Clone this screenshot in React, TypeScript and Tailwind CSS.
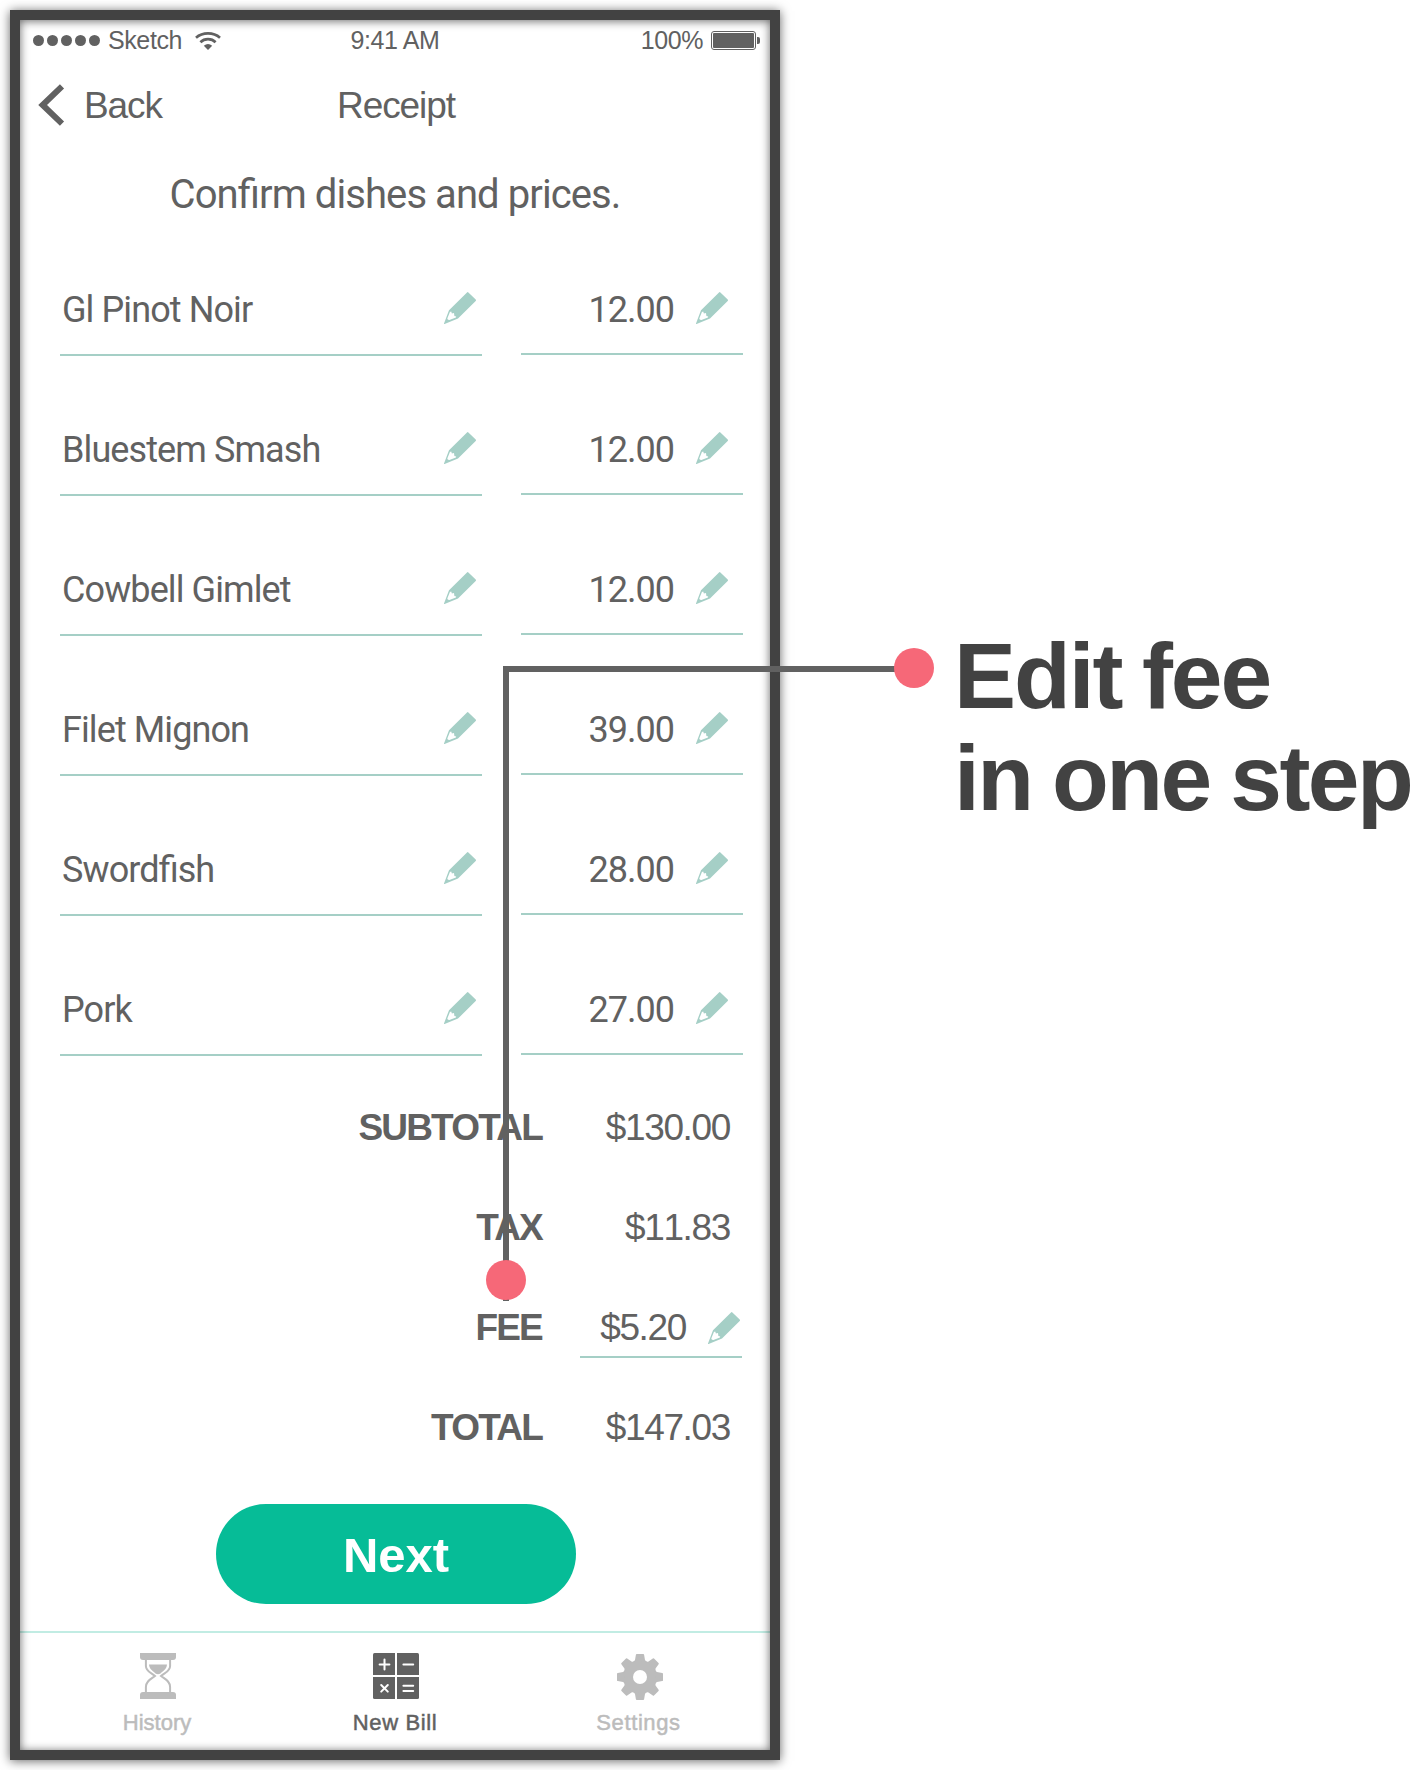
import React from "react";

const dishes = [
  { name: "Gl Pinot Noir", price: "12.00" },
  { name: "Bluestem Smash", price: "12.00" },
  { name: "Cowbell Gimlet", price: "12.00" },
  { name: "Filet Mignon", price: "39.00" },
  { name: "Swordfish", price: "28.00" },
  { name: "Pork", price: "27.00" },
];

const totals = [
  { label: "SUBTOTAL", value: "$130.00", editable: false },
  { label: "TAX", value: "$11.83", editable: false },
  { label: "FEE", value: "$5.20", editable: true },
  { label: "TOTAL", value: "$147.03", editable: false },
];

function Pencil() {
  return (
    <svg className="block size-8 shrink-0" viewBox="0 0 32 32">
      <path
        d="M23 .4Q23.7-.3 24.4.4L31.7 7.6Q32.4 8.3 31.7 9L14 26.6L.6 32Q-.2 32.2 0 31.4L5 18.2Z"
        fill="#a5cfc6"
      />
      <path d="M5.9 20L7.2 19.4L7.9 21.6L10 21L10.4 24L12.2 24.5L11.9 25.5L5.4 28Q3.4 28.2 3.3 26.6Z" fill="#fff" />
    </svg>
  );
}

function Wifi() {
  return (
    <svg className="block h-[18px] w-[26px]" viewBox="0 0 26 18">
      <g fill="none" stroke="#616161" strokeWidth="2.7">
        <path d="M1 5.7Q6 1.4 13 1.4T25 5.7" />
        <path d="M5.4 10.2Q8.5 7.2 13 7.2T20.6 10.2" />
      </g>
      <path d="M8.8 13.8Q13 10.2 17.2 13.8L13 17.9Z" fill="#616161" />
    </svg>
  );
}

function Hourglass() {
  return (
    <svg className="block h-[46px] w-9" viewBox="0 0 36 46">
      <g fill="#bcbcbc">
        <path d="M0 0H36V4Q36 7 33 7H3Q0 7 0 4Z" />
        <path d="M0 46H36V42Q36 39 33 39H3Q0 39 0 42Z" />
        <path d="M9 11.5H27C26.5 17 22 18.5 20.5 20.5Q18 22 15.5 20.5C14 18.5 9.5 17 9 11.5Z" />
      </g>
      <path
        d="M5.9 6V13C5.9 18.5 11 19.5 15 23C11 26 5.9 28 5.9 34V40M30.1 6V13C30.1 18.5 25 19.5 21 23C25 26 30.1 28 30.1 34V40"
        fill="none"
        stroke="#bcbcbc"
        strokeWidth="2"
      />
    </svg>
  );
}

function Calculator() {
  return (
    <svg className="block size-[46px]" viewBox="0 0 46 46">
      <g fill="#616161">
        <path d="M1.5 0H22V22H0V1.5Q0 0 1.5 0Z" />
        <path d="M24 0H44.5Q46 0 46 1.5V22H24Z" />
        <path d="M0 24H22V46H1.5Q0 46 0 44.5Z" />
        <path d="M24 24H46V44.5Q46 46 44.5 46H24Z" />
      </g>
      <g stroke="#fff" strokeWidth="2" strokeLinecap="round">
        <path d="M6.6 11.5H16.4M11.5 6.6V16.4M30.4 11.5H40.2M30.4 32.7H40.2M30.4 38H40.2" />
        <path d="M8.2 32L14.8 38.6M14.8 32L8.2 38.6" />
      </g>
    </svg>
  );
}

function Gear() {
  return (
    <svg className="relative top-px block size-[46px]" viewBox="-23 -23 46 46">
      <g fill="#bcbcbc">
        {[0, 45, 90, 135, 180, 225, 270, 315].map((angle) => (
          <path
            key={angle}
            transform={`rotate(${angle})`}
            d="M-3.2-23H3.2Q4-23 4.1-22.2L5-17Q5.4-15.6 8.4-14.6L0-8L-8.4-14.6Q-5.4-15.6-5-17L-4.1-22.2Q-4-23-3.2-23Z"
          />
        ))}
        <circle r="16" />
      </g>
      <circle r="7" fill="#fff" />
    </svg>
  );
}

function StatusBar() {
  return (
    <div className="grid h-[41px] grid-cols-3 items-center pr-[10px] pl-[13px] text-[25px] leading-none tracking-[-0.4px]">
      <div className="flex items-center">
        <div className="flex gap-[3px]">
          {[0, 1, 2, 3, 4].map((dot) => (
            <span key={dot} className="size-[11px] rounded-full bg-[#616161]" />
          ))}
        </div>
        <span className="mr-[13px] ml-2">Sketch</span>
        <Wifi />
      </div>
      <div className="pr-[3px] text-center">9:41 AM</div>
      <div className="flex items-center justify-end">
        <span>100%</span>
        <span className="ml-2 h-[19px] w-[45px] rounded-[3px] border border-[#616161] p-px">
          <span className="block h-full rounded-[1px] bg-[#616161]" />
        </span>
        <span className="ml-px h-[7px] w-[3px] rounded-r-[2px] bg-[#616161]" />
      </div>
    </div>
  );
}

function Tab({ icon, label, className }: { icon: React.ReactNode; label: string; className: string }) {
  return (
    <div className={`flex flex-col items-center pt-5 ${className}`}>
      {icon}
      <span className="mt-3 mr-[2px] text-[22px] leading-[23px] whitespace-nowrap [-webkit-text-stroke:0.5px_currentColor]">
        {label}
      </span>
    </div>
  );
}

export default function App() {
  return (
    <div className="relative h-[1770px] w-[1412px] overflow-hidden bg-white p-[10px] font-['Liberation_Sans',Arial,sans-serif] text-[#616161]">
      <main className="relative h-[1750px] w-[770px] p-[10px]">
        <StatusBar />

        <nav className="relative flex h-[88px] items-center justify-center text-[37px] leading-none tracking-[-1.1px]">
          <div className="absolute left-[18px] flex items-center">
            <svg className="block h-[42px] w-[27px]" viewBox="0 0 27 42">
              <path d="M24 2.4L4.6 21L24 39.6" fill="none" stroke="#616161" strokeWidth="6" />
            </svg>
            <span className="ml-[19px]">Back</span>
          </div>
          <span className="ml-[2px]">Receipt</span>
        </nav>

        <h1 className="flex h-[68px] items-end justify-center font-['Roboto',sans-serif] text-[40px] leading-[44px] font-normal tracking-[-0.92px] [font-feature-settings:'liga'_1]">
          Confirm dishes and prices.
        </h1>

        <section className="-mt-px font-['Roboto',sans-serif] text-[36px] leading-none tracking-[-0.9px] [font-feature-settings:'liga'_1]">
          {dishes.map((dish) => (
            <div key={dish.name} className="flex h-[140px] items-end pr-[27px] pl-10">
              <div className="flex h-[94px] w-[422px] items-center justify-between border-b-2 border-[#a5cfc6] pr-[6px] pl-[2px]">
                <span className="pt-[3px]">{dish.name}</span>
                <Pencil />
              </div>
              <div className="mb-px ml-[39px] flex h-[92px] w-[222px] items-center justify-end border-b-2 border-[#a5cfc6] pr-[15px]">
                <span className="mr-[22px] pt-[3px] tracking-[-1px]">{dish.price}</span>
                <Pencil />
              </div>
            </div>
          ))}
        </section>

        <section className="mt-[21px] text-[37px] leading-none tracking-[-1.35px] [font-kerning:none]">
          {totals.map((row) => (
            <div key={row.label} className="flex h-[100px] items-center">
              <span className="w-[522px] text-right font-bold tracking-[-1.8px] [font-kerning:normal]">{row.label}</span>
              {row.editable ? (
                <div className="ml-[38px] flex h-[62px] w-[162px] items-center justify-end border-b-2 border-[#a5cfc6] pr-[2px]">
                  <span className="mr-[22px] pt-[2px]">{row.value}</span>
                  <span className="pt-1">
                    <Pencil />
                  </span>
                </div>
              ) : (
                <span className="w-[188px] text-right">{row.value}</span>
              )}
            </div>
          ))}
        </section>

        <button className="mt-[27px] ml-[196px] flex h-[100px] w-[360px] items-center justify-center rounded-full bg-[#06bc97] pt-[3px] text-[49px] leading-none font-bold text-white">
          Next
        </button>

        <footer className="mt-[27px] flex h-[119px] border-t-2 border-[#c1ece3] text-[#bcbcbc]">
          <Tab icon={<Hourglass />} label="History" className="ml-[38px] w-[200px]" />
          <Tab icon={<Calculator />} label="New Bill" className="ml-[38px] w-[200px] tracking-[0.6px] text-[#616161]" />
          <Tab icon={<Gear />} label="Settings" className="ml-[43px] w-[200px] pl-px tracking-[0.6px]" />
        </footer>

        <div className="pointer-events-none absolute inset-0 border-[10px] border-[#424242] shadow-[0_1px_10px_rgba(0,0,0,0.6),inset_0_1px_10px_rgba(0,0,0,0.6)]" />
      </main>

      {/* Callout: connector with end points and caption */}
      <div className="absolute top-[666px] left-[503px] h-[635px] w-[411px] border-t-[6px] border-l-[6px] border-[#616161]" />
      <span className="absolute top-[1260px] left-[486px] size-10 rounded-full bg-[#f66878]" />
      <span className="absolute top-[648px] left-[894px] size-10 rounded-full bg-[#f66878]" />
      <p className="absolute top-[625px] left-[954px] text-[93px] leading-[102px] font-bold whitespace-nowrap text-[#424242] [word-spacing:-3px]">
        <span className="block tracking-[-2.1px]">Edit fee</span>
        <span className="block tracking-[-2.5px]">in one step</span>
      </p>
    </div>
  );
}
